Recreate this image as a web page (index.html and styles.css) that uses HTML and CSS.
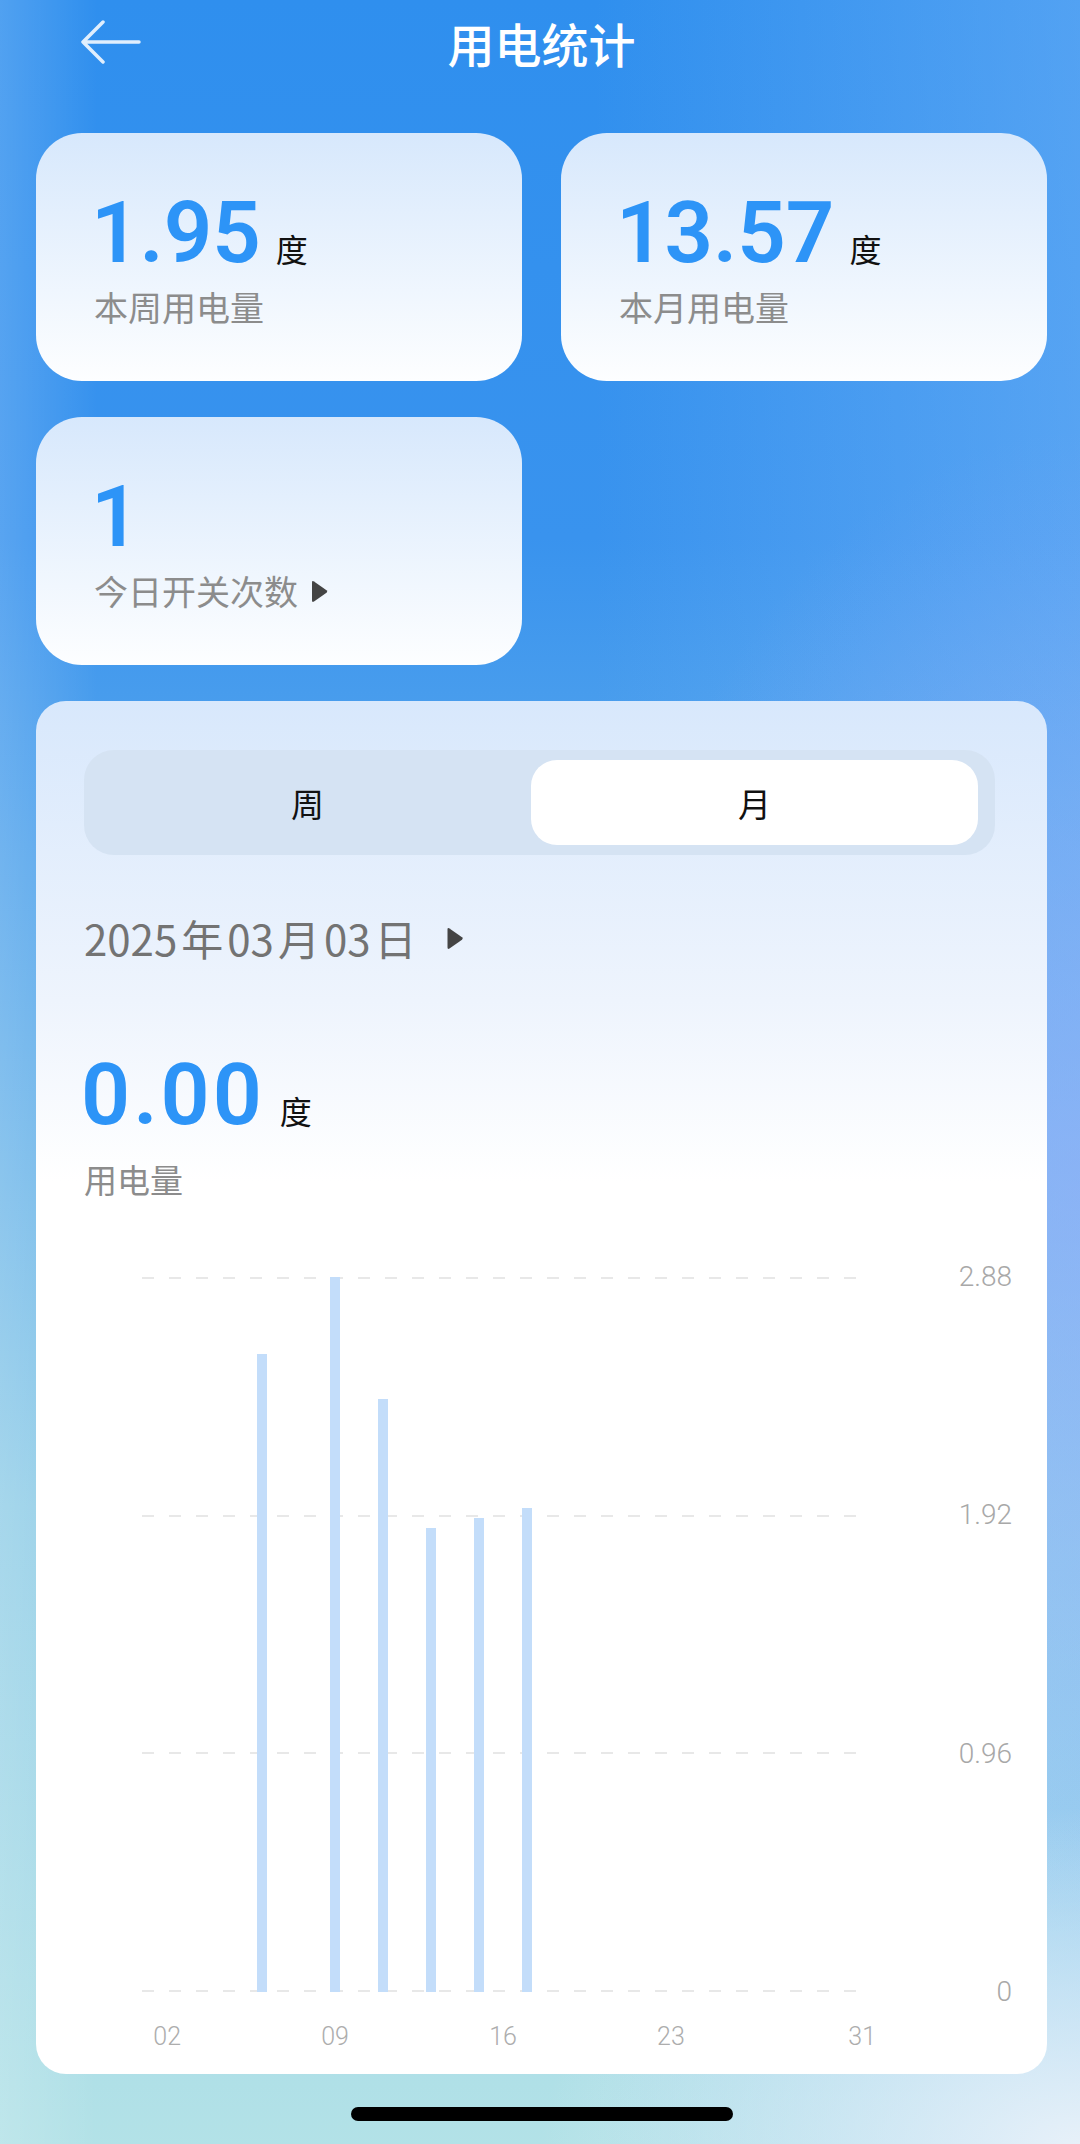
FILE: index.html
```html
<!DOCTYPE html>
<html lang="zh-CN">

<head>
    <meta charset="UTF-8">
    <meta name="viewport" content="width=device-width, initial-scale=1.0">
    <title>用电统计</title>
    <link rel="stylesheet" href="styles.css">
</head>

<body>
    <section class="page">
        <header class="top-bar">
            <svg class="back" viewBox="0 0 62 44">
                <path d="M60 22H4M24 2L4 22L24 42" />
            </svg>
            <h1>用电统计</h1>
            <span></span>
        </header>

        <div class="summary">
            <div class="stat-card">
                <div class="stat-value"><span class="stat-num">1.95</span><span class="unit">度</span></div>
                <div class="stat-label">本周用电量</div>
            </div>
            <div class="stat-card">
                <div class="stat-value"><span class="stat-num">13.57</span><span class="unit">度</span></div>
                <div class="stat-label">本月用电量</div>
            </div>
            <div class="stat-card">
                <div class="stat-value"><span class="stat-num">1</span></div>
                <div class="stat-label">今日开关次数
                    <svg class="caret" viewBox="0 0 16 25"><path d="M2 2.5L14.5 11.2Q16 12.5 14.5 13.8L2 22.5Q0 23.6 0 21.5V3.5Q0 1.4 2 2.5Z" /></svg>
                </div>
            </div>
        </div>

        <div class="usage-card">
            <div class="tabs">
                <div class="tab">周</div>
                <div class="tab active">月</div>
            </div>

            <div class="date">2025<span class="cjk">年</span>03<span class="cjk">月</span>03<span class="cjk">日</span>
                <svg class="caret date-caret" viewBox="0 0 16 25"><path d="M2 2.5L14.5 11.2Q16 12.5 14.5 13.8L2 22.5Q0 23.6 0 21.5V3.5Q0 1.4 2 2.5Z" /></svg>
            </div>

            <div class="usage-value"><span class="stat-num">0.00</span><span class="unit">度</span></div>
            <div class="usage-label">用电量</div>

            <div class="chart">
                <div class="plot">
                    <div class="grid-lines">
                        <div class="grid-line"></div>
                        <div class="grid-line"></div>
                        <div class="grid-line"></div>
                        <div class="grid-line"></div>
                    </div>
                    <div class="bars" id="bars"></div>
                </div>
                <div class="y-axis">
                    <span>2.88</span>
                    <span>1.92</span>
                    <span>0.96</span>
                    <span>0</span>
                </div>
                <div class="x-axis" id="x-axis"></div>
            </div>
        </div>

        <div class="home-bar"></div>
    </section>

    <script>
        // daily usage for march, day -> kWh
        const usage = { 6: 2.57, 9: 2.88, 11: 2.39, 13: 1.87, 15: 1.91, 17: 1.95 };
        const maxValue = 2.88;
        const xLabels = { 2: "02", 9: "09", 16: "16", 23: "23", 31: "31" };

        const bars = document.querySelector("#bars");
        const xAxis = document.querySelector("#x-axis");

        for (let day = 1; day <= 31; day++) {
            const slot = document.createElement("div");
            slot.className = "slot";
            if (usage[day] !== undefined) {
                const bar = document.createElement("div");
                bar.className = "bar";
                bar.style.height = (usage[day] / maxValue * 100) + "%";
                slot.appendChild(bar);
            }
            bars.appendChild(slot);

            const tick = document.createElement("div");
            tick.className = "slot";
            if (xLabels[day]) {
                tick.textContent = xLabels[day];
            }
            xAxis.appendChild(tick);
        }
    </script>
</body>

</html>
```

FILE: styles.css
```css
* {
    box-sizing: border-box;
    margin: 0;
}

body {
    width: 1080px;
    min-height: 2144px;
    font-family: "Noto Sans CJK SC", sans-serif;
    background:
        radial-gradient(ellipse 50% 16% at 100% 100%, #e8f1f9 0%, rgba(232, 241, 249, 0) 100%),
        radial-gradient(ellipse 45% 35% at 100% 55%, rgba(150, 172, 250, 0.55) 0%, rgba(150, 172, 250, 0) 100%),
        linear-gradient(90deg, rgba(255, 255, 255, 0.16) 0%, rgba(255, 255, 255, 0) 9%),
        linear-gradient(90deg, rgba(130, 185, 250, 0) 55%, rgba(135, 190, 250, 0.4) 100%),
        linear-gradient(180deg, #2f8fee 0%, #3993ee 25%, #66b0eb 48%, #95cfe8 70%, #b3e2e7 100%);
}

.page {
    padding: 0 33px 30px 36px;
}

/* header */
.top-bar {
    display: grid;
    grid-template-columns: 1fr auto 1fr;
    align-items: center;
    height: 84px;
}

.back {
    width: 62px;
    height: 44px;
    margin-left: 43px;
    fill: none;
    stroke: rgba(255, 255, 255, 0.85);
    stroke-width: 3.5;
    stroke-linecap: round;
    stroke-linejoin: round;
}

.top-bar h1 {
    color: #fff;
    font-size: 47px;
    font-weight: 500;
    line-height: 1;
}

/* summary cards */
.summary {
    display: grid;
    grid-template-columns: 1fr 1fr;
    gap: 36px 39px;
    margin-top: 49px;
}

.stat-card {
    height: 248px;
    border-radius: 46px;
    background: linear-gradient(180deg, #d7e8fc 0%, #fdfeff 100%);
    padding: 58px 0 0 58px;
}

.stat-value,
.usage-value {
    display: flex;
    align-items: baseline;
}

.stat-num {
    font-family: Roboto, sans-serif;
    font-size: 85px;
    font-weight: 600;
    line-height: 1;
    color: #2d94f7;
    margin-left: -3px;
}

.unit {
    font-size: 32px;
    line-height: 1;
    color: #111;
    margin-left: 15px;
}

.stat-label {
    display: flex;
    align-items: center;
    margin-top: 11px;
    font-size: 34px;
    line-height: 40px;
    color: #8c8c8c;
}

.caret {
    width: 16px;
    height: 25px;
    margin-left: 14px;
    fill: #444;
}

/* usage card */
.usage-card {
    margin-top: 36px;
    border-radius: 30px;
    background: linear-gradient(180deg, #d8e8fc 0, #eef4fd 300px, #fff 480px);
    padding: 49px 35px 22px 48px;
}

.tabs {
    display: grid;
    grid-template-columns: 1fr 1fr;
    height: 105px;
    margin-right: 17px;
    padding: 10px 17px 10px 0;
    background: #d5e3f3;
    border-radius: 30px;
}

.tab {
    display: flex;
    align-items: center;
    justify-content: center;
    font-size: 33px;
    color: #111;
    border-radius: 26px;
}

.tab.active {
    background: #fff;
}

.date {
    display: flex;
    align-items: center;
    margin-top: 58px;
    font-size: 42px;
    line-height: 50px;
    color: #737373;
}

.date .cjk {
    margin: 0 4px;
}

.date-caret {
    margin-left: 26px;
    width: 17px;
}

.usage-value {
    margin-top: 89px;
}

.usage-value .stat-num {
    font-size: 86px;
    letter-spacing: 3px;
}

.usage-label {
    margin-top: 21px;
    font-size: 33px;
    line-height: 40px;
    color: #8c8c8c;
}

/* chart */
.chart {
    display: grid;
    grid-template-columns: 746px 1fr;
    margin: 78px 0 0 46px;
}

.plot {
    display: grid;
    height: 715px;
}

.grid-lines,
.bars {
    grid-area: 1 / 1;
}

.grid-lines {
    display: flex;
    flex-direction: column;
    justify-content: space-between;
    margin: 0 12px;
}

.grid-line {
    height: 2px;
    background: repeating-linear-gradient(90deg, #e8e8e8 0 12px, transparent 12px 27px);
}

.bars {
    display: flex;
}

.slot {
    flex: 1;
    display: flex;
    justify-content: center;
    align-items: flex-end;
    white-space: nowrap;
}

.bar {
    width: 10px;
    background: #c3ddfa;
}

.y-axis {
    display: flex;
    flex-direction: column;
    justify-content: space-between;
    align-items: flex-end;
    height: 743px;
    margin: -14px 0;
    font-family: Roboto, sans-serif;
    font-weight: 300;
    font-size: 28px;
    line-height: 28px;
    color: #a8a8a8;
}

.x-axis {
    display: flex;
    margin-top: 30px;
    font-family: Roboto, sans-serif;
    font-weight: 300;
    font-size: 25px;
    line-height: 30px;
    color: #adadad;
}

.home-bar {
    width: 382px;
    height: 14px;
    margin: 33px auto 0;
    border-radius: 7px;
    background: #000;
}
```
